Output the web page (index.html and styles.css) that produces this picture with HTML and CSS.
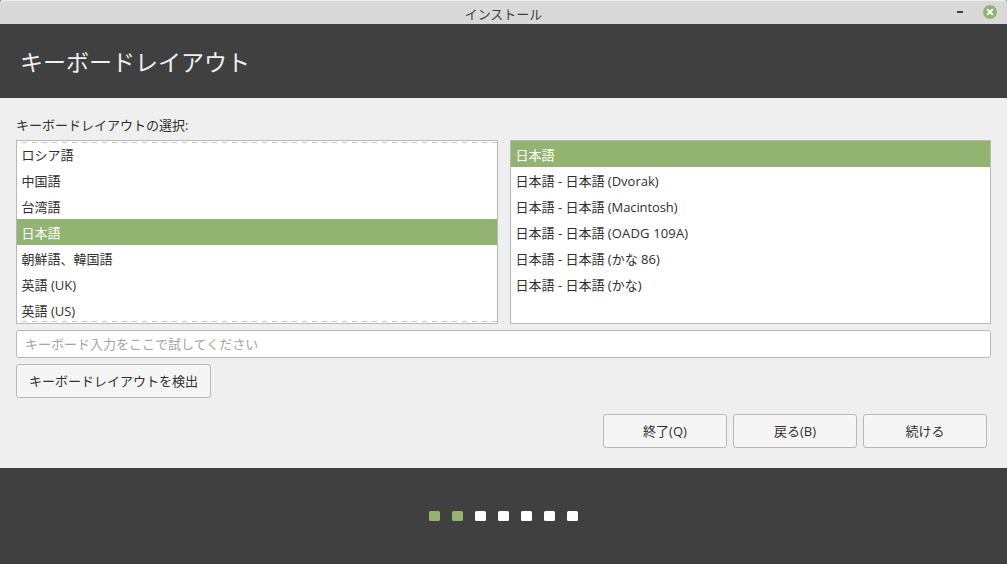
FILE: index.html
```html
<!DOCTYPE html>
<html lang="ja">
<head>
<meta charset="utf-8">
<title>インストール</title>
<link rel="stylesheet" href="styles.css">
</head>
<body>
<div class="window">
  <div class="titlebar">
    <span class="caption">インストール</span>
    <div class="controls">
      <svg class="minimize" width="6" height="2" viewBox="0 0 6 2"><rect width="6" height="2" fill="#404040"/></svg>
      <svg class="close" width="14" height="14" viewBox="0 0 14 14"><circle cx="7" cy="7" r="7" fill="#92b372"/><path d="M4.2 4.2l5.6 5.6M9.8 4.2l-5.6 5.6" stroke="#fff" stroke-width="1.9"/></svg>
    </div>
  </div>
  <header class="header"><h1>キーボードレイアウト</h1></header>
  <main class="content">
    <div class="label">キーボードレイアウトの選択:</div>
    <div class="lists">
      <ul class="list list-scroll">
        <li>ロシア語</li>
        <li>中国語</li>
        <li>台湾語</li>
        <li class="selected">日本語</li>
        <li>朝鮮語、韓国語</li>
        <li>英語 (UK)</li>
        <li>英語 (US)</li>
      </ul>
      <ul class="list">
        <li class="selected">日本語</li>
        <li>日本語 - 日本語 (Dvorak)</li>
        <li>日本語 - 日本語 <span class="mac">(Macintosh)</span></li>
        <li>日本語 - 日本語 <span class="oadg">(OADG 109A)</span></li>
        <li>日本語 - 日本語 (かな 86)</li>
        <li>日本語 - 日本語 (かな)</li>
      </ul>
    </div>
    <input class="entry" type="text" placeholder="キーボード入力をここで試してください">
    <button class="button detect">キーボードレイアウトを検出</button>
    <div class="actions">
      <button class="button">終了(Q)</button>
      <button class="button">戻る(B)</button>
      <button class="button">続ける</button>
    </div>
  </main>
  <footer class="footer">
    <i class="dot done"></i><i class="dot done"></i><i class="dot"></i><i class="dot"></i><i class="dot"></i><i class="dot"></i><i class="dot"></i>
  </footer>
</div>
</body>
</html>
```
FILE: styles.css
```css
* { box-sizing: border-box; }
body { margin: 0; background: #404040; overflow: hidden; }
.window {
  width: 1007px; height: 564px;
  display: flex; flex-direction: column;
  font: 13px/26px "Open Sans", "Noto Sans CJK JP", sans-serif;
  color: #303030;
}
.titlebar {
  height: 24px; flex: none;
  display: grid; grid-template-columns: 1fr auto 1fr; align-items: center;
  background: #d9d9d9; border-top: 1px solid #efefef;
  border-radius: 2px 2px 0 0;
}
.caption { grid-column: 2; line-height: 20px; padding: 3px 0 0; color: #404040; }
.controls {
  display: flex; justify-content: flex-end; align-items: center;
  gap: 20px; padding-right: 10px;
}
.minimize { margin-top: -1px; }
.close { margin-top: -1px; }
.header { height: 74px; flex: none; background: #404040; padding: 21px 20px 0; }
.header h1 { margin: 0; font-size: 23px; line-height: 34px; font-weight: 400; color: #f0f0f0; }
.content {
  height: 370px; flex: none;
  display: flex; flex-direction: column;
  background: #efefef; padding: 14px 16px 0;
}
.label { height: 28px; line-height: 26px; }
.lists { display: grid; grid-template-columns: 482px 481px; gap: 12px; height: 184px; }
.list {
  list-style: none; margin: 0; padding: 0; position: relative;
  background: #fff; border: 1px solid #b8b8b8;
}
.list li { height: 26px; line-height: 28px; padding-left: 4.5px; }
.list .selected { background: #92b372; color: #fff; }
.mac { letter-spacing: -0.1px; }
.oadg { letter-spacing: 0.15px; }
.list-scroll::before, .list-scroll::after {
  content: ""; position: absolute; left: 5px; right: 0; height: 1px;
  background: repeating-linear-gradient(90deg, #c6c6c6 0 5px, transparent 5px 10px);
}
.list-scroll::before { top: 1px; }
.list-scroll::after { bottom: 1px; }
.entry {
  height: 28px; margin: 6px 0; padding: 0 8px;
  border: 1px solid #b8b8b8; border-radius: 3px; background: #fff;
  font: inherit; line-height: 24px;
}
.entry::placeholder { color: #a4a4a4; opacity: 1; }
.button {
  width: 124px; height: 34px; padding: 0;
  border: 1px solid #b8b8b8; border-radius: 3px; background: #f5f5f5;
  font: inherit; color: #303030; line-height: 26px;
}
.detect { width: 195px; }
.actions { display: flex; justify-content: flex-end; gap: 6px; padding: 16px 4px 0; }
.footer {
  flex: 1; background: #404040; border-bottom: 1px solid #383838;
  display: flex; justify-content: center; gap: 12px; padding-top: 43px;
}
.dot { width: 11px; height: 10px; border-radius: 1.5px; background: #fff; }
.done { background: #92b372; }
```
